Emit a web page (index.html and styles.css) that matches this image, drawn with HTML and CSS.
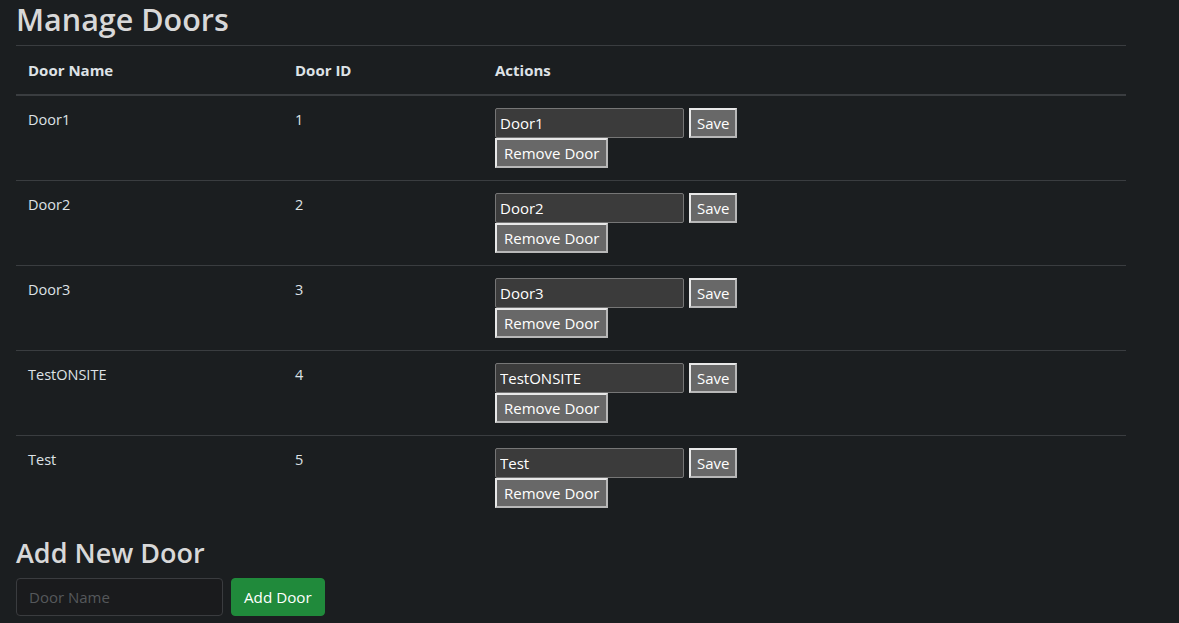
FILE: index.html
```html
<!DOCTYPE html>
<html>
<head>
<meta charset="utf-8">
<title>Manage Doors</title>
<link rel="stylesheet" href="styles.css">
</head>
<body>
<div class="page">
  <h2 class="title">Manage Doors</h2>
  <table class="doors">
    <colgroup>
      <col class="c-name"><col class="c-id"><col class="c-actions">
    </colgroup>
    <thead>
      <tr><th>Door Name</th><th>Door ID</th><th>Actions</th></tr>
    </thead>
    <tbody>
      <tr>
        <td>Door1</td><td>1</td>
        <td><div class="edit-row"><input class="name-input" type="text" value="Door1"><button class="btn-plain btn-save">Save</button></div><button class="btn-plain">Remove Door</button></td>
      </tr>
      <tr>
        <td>Door2</td><td>2</td>
        <td><div class="edit-row"><input class="name-input" type="text" value="Door2"><button class="btn-plain btn-save">Save</button></div><button class="btn-plain">Remove Door</button></td>
      </tr>
      <tr>
        <td>Door3</td><td>3</td>
        <td><div class="edit-row"><input class="name-input" type="text" value="Door3"><button class="btn-plain btn-save">Save</button></div><button class="btn-plain">Remove Door</button></td>
      </tr>
      <tr>
        <td>TestONSITE</td><td>4</td>
        <td><div class="edit-row"><input class="name-input" type="text" value="TestONSITE"><button class="btn-plain btn-save">Save</button></div><button class="btn-plain">Remove Door</button></td>
      </tr>
      <tr>
        <td>Test</td><td>5</td>
        <td><div class="edit-row"><input class="name-input" type="text" value="Test"><button class="btn-plain btn-save">Save</button></div><button class="btn-plain">Remove Door</button></td>
      </tr>
    </tbody>
  </table>
  <h3 class="subtitle">Add New Door</h3>
  <div class="add-row">
    <input class="add-input" type="text" placeholder="Door Name">
    <button class="btn-success">Add Door</button>
  </div>
</div>
</body>
</html>
```
FILE: styles.css
```css
html, body {
  margin: 0;
  padding: 0;
  background: #1b1e20;
}
body {
  font-family: "Open Sans", "Noto Sans", "Liberation Sans", sans-serif;
  color: #dee2e6;
  font-size: 16px;
  line-height: 1.5;
}
.page {
  padding: 0 16px;
  width: 1110px;
}
.title {
  margin: 0 0 7px 0;
  font-size: 30.5px;
  font-weight: 600;
  line-height: 38px;
  color: #d8d8d8;
}
.doors {
  width: 1110px;
  border-collapse: collapse;
  margin-bottom: 16px;
}
.c-name { width: 267px; }
.c-id { width: 200px; }
.doors th, .doors td {
  text-align: left;
  vertical-align: top;
  padding: 12px;
  line-height: 24px;
}
.doors thead th {
  border-top: 1px solid #3a3d40;
  border-bottom: 2px solid #3a3d40;
  font-weight: 700;
  font-size: 15px;
}
.doors tbody td {
  border-top: 1px solid #3a3d40;
  font-size: 14.5px;
}
.doors tbody tr:first-child td {
  border-top: none;
}
.edit-row {
  display: flex;
  gap: 5px;
  align-items: flex-start;
}
.name-input {
  box-sizing: border-box;
  width: 189px;
  height: 30px;
  margin: 0;
  padding: 0 4px;
  background: #3b3b3b;
  color: #ffffff;
  border: 1px solid #767676;
  border-radius: 2px;
  font-family: inherit;
  font-size: 15px;
}
.btn-plain {
  box-sizing: border-box;
  height: 30px;
  margin: 0;
  padding: 0 7px;
  background: #686868;
  color: #ffffff;
  border: 2px solid #e8e8e8;
  border-right-color: #b8b8b8;
  border-bottom-color: #b8b8b8;
  font-family: inherit;
  font-size: 15px;
  display: block;
}
.btn-save {
  padding: 0 6px;
}
.subtitle {
  margin: 0 0 8px 0;
  font-size: 27px;
  font-weight: 600;
  line-height: 34px;
  color: #d8d8d8;
}
.add-row {
  display: flex;
  gap: 8px;
}
.add-input {
  box-sizing: border-box;
  width: 207px;
  height: 38px;
  margin: 0;
  padding: 6px 12px;
  background: #1a1b1d;
  color: #dee2e6;
  border: 1px solid #3a3c3f;
  border-radius: 4px;
  font-family: inherit;
  font-size: 15px;
}
.add-input::placeholder {
  color: #55585b;
}
.btn-success {
  box-sizing: border-box;
  height: 38px;
  margin: 0;
  padding: 6px 12px;
  background: #208a3b;
  color: #ffffff;
  border: 1px solid #208a3b;
  border-radius: 4px;
  font-family: inherit;
  font-size: 15.2px;
}
```
